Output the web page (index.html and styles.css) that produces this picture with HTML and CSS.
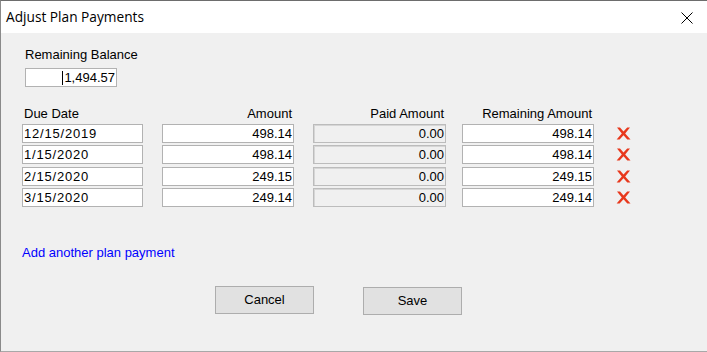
FILE: index.html
```html
<!DOCTYPE html>
<html lang="en">

<head>
  <meta charset="UTF-8">
  <meta name="viewport" content="width=device-width, initial-scale=1.0">
  <title>Adjust Plan Payments</title>
  <link rel="stylesheet" href="styles.css">
</head>

<body>
  <div class="dialog">
    <div class="dialog__title">
      <span class="dialog__caption">Adjust Plan Payments</span>
      <span class="dialog__close">
        <svg width="12" height="12" viewBox="0 0 12 12">
          <path d="M0.5 0.5 L11.5 11.5 M11.5 0.5 L0.5 11.5" stroke="#000" stroke-width="1" fill="none" />
        </svg>
      </span>
    </div>

    <div class="dialog__body">
      <div class="balance">
        <div class="label">Remaining Balance</div>
        <div class="field field--balance"><span class="caret"></span>1,494.57</div>
      </div>

      <div class="plan">
        <div class="plan__head col-date">Due Date</div>
        <div class="plan__head col-amount">Amount</div>
        <div class="plan__head col-paid">Paid Amount</div>
        <div class="plan__head col-remain">Remaining Amount</div>
        <div></div>

        <div class="field col-date">12/15/2019</div>
        <div class="field col-amount">498.14</div>
        <div class="field field--paid col-paid">0.00</div>
        <div class="field col-remain">498.14</div>
        <div class="remove"><svg width="15" height="13" viewBox="0 0 15 13"><path d="M1 0.5 L4 0.5 L7.5 4.6 L11.2 0.5 L14 0.5 L9.2 6.4 L14.5 12.5 L11.3 12.5 L7.5 8.2 L3.6 12.5 L0.6 12.5 L5.8 6.4 Z" fill="#e8381c" /></svg></div>

        <div class="field col-date">1/15/2020</div>
        <div class="field col-amount">498.14</div>
        <div class="field field--paid col-paid">0.00</div>
        <div class="field col-remain">498.14</div>
        <div class="remove"><svg width="15" height="13" viewBox="0 0 15 13"><path d="M1 0.5 L4 0.5 L7.5 4.6 L11.2 0.5 L14 0.5 L9.2 6.4 L14.5 12.5 L11.3 12.5 L7.5 8.2 L3.6 12.5 L0.6 12.5 L5.8 6.4 Z" fill="#e8381c" /></svg></div>

        <div class="field col-date">2/15/2020</div>
        <div class="field col-amount">249.15</div>
        <div class="field field--paid col-paid">0.00</div>
        <div class="field col-remain">249.15</div>
        <div class="remove"><svg width="15" height="13" viewBox="0 0 15 13"><path d="M1 0.5 L4 0.5 L7.5 4.6 L11.2 0.5 L14 0.5 L9.2 6.4 L14.5 12.5 L11.3 12.5 L7.5 8.2 L3.6 12.5 L0.6 12.5 L5.8 6.4 Z" fill="#e8381c" /></svg></div>

        <div class="field col-date">3/15/2020</div>
        <div class="field col-amount">249.14</div>
        <div class="field field--paid col-paid">0.00</div>
        <div class="field col-remain">249.14</div>
        <div class="remove"><svg width="15" height="13" viewBox="0 0 15 13"><path d="M1 0.5 L4 0.5 L7.5 4.6 L11.2 0.5 L14 0.5 L9.2 6.4 L14.5 12.5 L11.3 12.5 L7.5 8.2 L3.6 12.5 L0.6 12.5 L5.8 6.4 Z" fill="#e8381c" /></svg></div>
      </div>

      <a class="add-link" href="#">Add another plan payment</a>

      <div class="actions">
        <button class="btn btn--cancel">Cancel</button>
        <button class="btn btn--save">Save</button>
      </div>
    </div>
  </div>
</body>

</html>
```

FILE: styles.css
```css
html,
body {
  height: 100%;
}

body {
  margin: 0;
  font-family: "Liberation Sans", Arial, sans-serif;
  font-size: 13px;
  color: #000;
  background-color: #f0f0f0;
}

.dialog {
  width: 707px;
  height: 352px;
  box-sizing: border-box;
  border-top: 1px solid #6d6d6d;
  border-left: 1px solid #8a8a8a;
  border-bottom: 1px solid #a8a8a8;
  display: flex;
  flex-direction: column;
}

.dialog__title {
  height: 32px;
  flex-shrink: 0;
  background-color: #fff;
  display: flex;
  align-items: center;
  justify-content: space-between;
  padding: 0 14px 0 5px;
}

.dialog__caption {
  font-family: "Open Sans", "Liberation Sans", sans-serif;
  font-size: 13.7px;
  padding-bottom: 1px;
}

.dialog__close {
  display: flex;
  margin-top: 1px;
}

.dialog__body {
  flex-grow: 1;
  background-color: #f0f0f0;
  padding: 14px 0 0 21px;
}

.label {
  line-height: 15px;
}

.balance {
  margin-left: 3px;
}

.balance .label {
  margin-bottom: 6px;
}

.field {
  box-sizing: border-box;
  height: 19px;
  line-height: 17px;
  padding: 0 1px;
  background-color: #fff;
  border: 1px solid #b2b2b2;
  white-space: nowrap;
  overflow: hidden;
  text-align: right;
}

.field--balance {
  width: 92px;
  display: flex;
  justify-content: flex-end;
  align-items: center;
}

.caret {
  width: 1px;
  height: 14px;
  background-color: #000;
  margin-right: 1px;
}

.plan {
  display: grid;
  grid-template-columns: 140px 151px 149px 153px auto;
  row-gap: 2.3px;
  margin-top: 19px;
}

.plan__head {
  box-sizing: border-box;
  line-height: 15px;
  text-align: right;
  padding-right: 2px;
  margin-bottom: 0.7px;
}

.col-date {
  width: 121px;
}

.col-amount,
.col-remain {
  width: 132px;
}

.col-paid {
  width: 133px;
}

.plan__head.col-date {
  text-align: left;
  padding-left: 2px;
}

.field.col-date {
  text-align: left;
  letter-spacing: 0.8px;
}

.field--paid {
  background-color: #f0f0f0;
  border-color: #bcbcbc;
  box-shadow: inset 1px 1px 0 #d6d6d6;
}

.remove {
  display: flex;
  align-items: center;
  padding-left: 1px;
}

.add-link {
  display: block;
  width: max-content;
  margin-top: 38px;
  line-height: 15px;
  color: #0000ff;
  text-decoration: none;
}

.actions {
  display: flex;
  align-items: flex-start;
  margin-top: 26px;
}

.btn {
  box-sizing: border-box;
  width: 99px;
  height: 28px;
  padding: 0;
  font-family: "Liberation Sans", Arial, sans-serif;
  font-size: 13px;
  color: #000;
  background-color: #e1e1e1;
  border: 1px solid #adadad;
}

.btn--cancel {
  margin-left: 193px;
}

.btn--save {
  margin-left: 49px;
  margin-top: 1px;
}
```
